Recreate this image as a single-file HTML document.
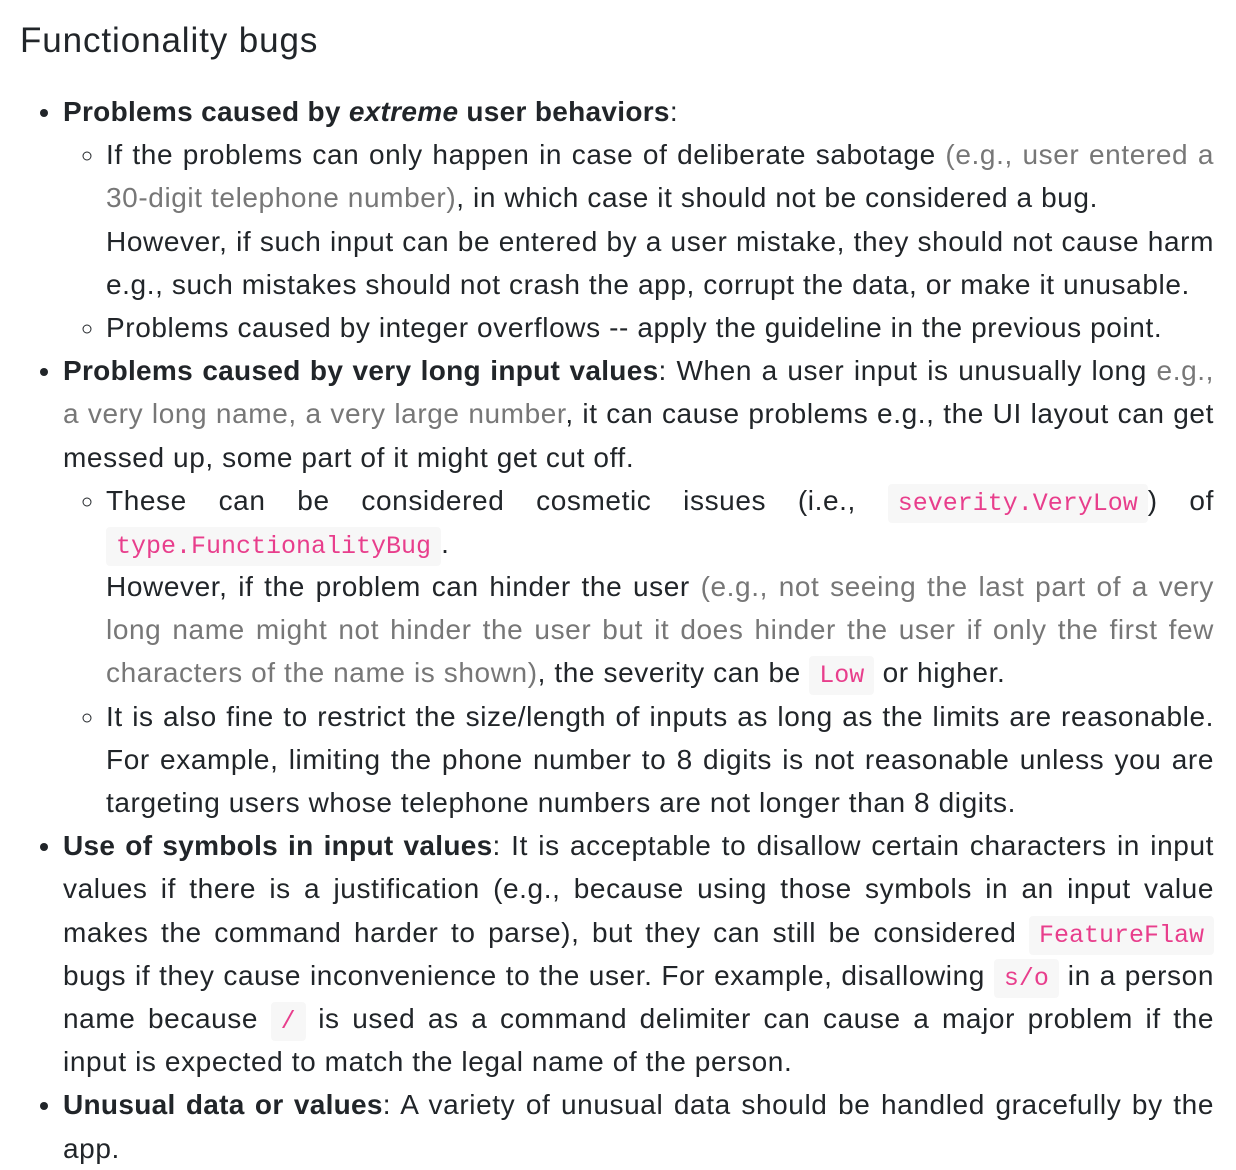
<!DOCTYPE html>
<html><head><meta charset="utf-8"><style>
body{margin:0;background:#fff;color:#212529;font-family:"Liberation Sans",sans-serif;width:1236px;height:1094px;overflow:hidden}
h2{font-weight:normal;font-size:35px;margin:0;position:absolute;left:20px;top:21px;letter-spacing:0.9px}
ul{margin:0;padding-left:43px}
ul ul{list-style:circle}
.main{position:absolute;top:90px;left:20px;width:1194px;font-size:28px;letter-spacing:0.6px;line-height:43.18px;text-align:justify}
b{letter-spacing:0.3px}
li{margin:0}
.g{color:#777}
code{font-family:"Liberation Mono",monospace;color:#e83e8c;background:#f7f7f7;font-size:25px;letter-spacing:0;padding:5px 10px;border-radius:4px;line-height:0}
</style></head><body>
<h2>Functionality bugs</h2>
<div class="main"><ul>
<li><b>Problems caused by <i>extreme</i> user behaviors</b>:
<ul><li>If the problems can only happen in case of deliberate sabotage <span class="g">(e.g., user entered a 30-digit telephone number)</span>, in which case it should not be considered a bug.<br>However, if such input can be entered by a user mistake, they should not cause harm e.g., such mistakes should not crash the app, corrupt the data, or make it unusable.</li>
<li>Problems caused by integer overflows -- apply the guideline in the previous point.</li></ul></li>
<li><b>Problems caused by very long input values</b>: When a user input is unusually long <span class="g">e.g., a very long name, a very large number</span>, it can cause problems e.g., the UI layout can get messed up, some part of it might get cut off.
<ul><li>These can be considered cosmetic issues (i.e., <code>severity.VeryLow</code>) of <code>type.FunctionalityBug</code>.<br>However, if the problem can hinder the user <span class="g">(e.g., not seeing the last part of a very long name might not hinder the user but it does hinder the user if only the first few characters of the name is shown)</span>, the severity can be <code>Low</code> or higher.</li>
<li>It is also fine to restrict the size/length of inputs as long as the limits are reasonable. For example, limiting the phone number to 8 digits is not reasonable unless you are targeting users whose telephone numbers are not longer than 8 digits.</li></ul></li>
<li><b>Use of symbols in input values</b>: It is acceptable to disallow certain characters in input values if there is a justification (e.g., because using those symbols in an input value makes the command harder to parse), but they can still be considered <code>FeatureFlaw</code> bugs if they cause inconvenience to the user. For example, disallowing <code>s/o</code> in a person name because <code>/</code> is used as a command delimiter can cause a major problem if the input is expected to match the legal name of the person.</li>
<li><b>Unusual data or values</b>: A variety of unusual data should be handled gracefully by the app.</li>
</ul></div>
</body></html>
